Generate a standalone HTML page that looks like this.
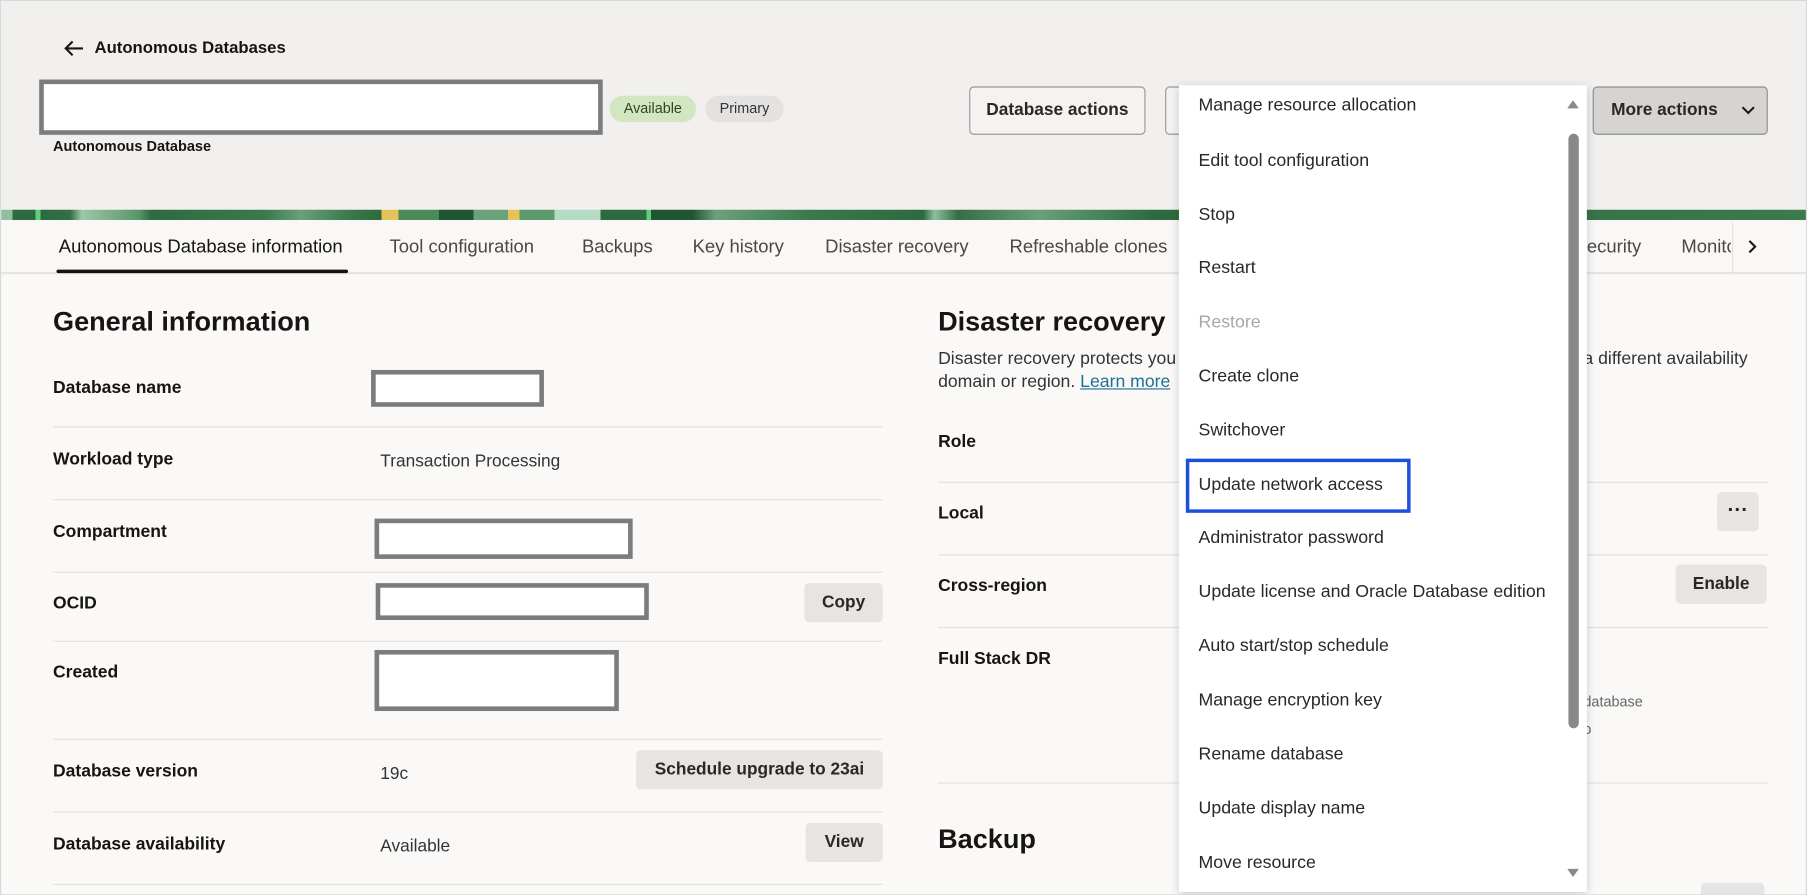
<!DOCTYPE html>
<html><head><meta charset="utf-8"><style>
*{margin:0;padding:0;box-sizing:border-box}
html,body{width:1807px;height:895px;overflow:hidden;background:#fff}
#w{position:absolute;left:0;top:0;width:1568px;height:777px;transform:scale(1.15242);transform-origin:0 0;font-family:"Liberation Sans",sans-serif;color:#161513;background:#faf9f8;border:1px solid #d8d8d8;overflow:hidden}
.a{position:absolute;white-space:nowrap}
.hdr{left:0;top:0;width:1568px;height:181px;background:#f1f0ee}
.ban{left:0;top:181px;width:1568px;height:9px;background:linear-gradient(90deg,#8fbf9f 0,#8fbf9f 10px,#2d6a3f 10px,#2d6a3f 30px,#5fd07a 30px,#5fd07a 34px,#2d6a3f 34px,#356e45 60px,#9cc7a8 70px,#5a9569 120px,#2f6a40 130px,#3b7a4c 230px,#69a07a 260px,#3d7a4d 300px,#2d6a3f 330px,#e6c25a 330px,#e6c25a 345px,#4b8a5b 345px,#4b8a5b 380px,#1f5530 380px,#1f5530 410px,#6ba27b 410px,#6ba27b 440px,#e6c25a 440px,#e6c25a 450px,#5a9a6c 450px,#5a9a6c 480px,#b5dcc2 480px,#b5dcc2 520px,#2d6a3f 520px,#2d6a3f 560px,#5fd07a 560px,#5fd07a 564px,#1f5530 564px,#1f5530 600px,#6ca07c 620px,#3b7a4c 700px,#2d6a3f 800px,#8fbf9f 810px,#356e45 830px,#69a07a 900px,#2d6a3f 1000px,#3b7a4c 1568px)}
.tabs{left:0;top:190px;width:1568px;height:47px;background:#f9f8f6;border-bottom:2px solid #e6e5e3}
.tab{top:205px;font-size:16px;color:#4a4846}
.lbl{font-size:15.2px;font-weight:bold}
.val{font-size:15px;color:#333}
.line{position:absolute;height:1px;background:#e2e1df}
.red{position:absolute;background:#fff;border:4px solid #7c7c7c}
.btn{position:absolute;background:#e6e5e3;border-radius:4px;font-size:15px;font-weight:bold;color:#2a2826;text-align:center}
.mi{position:absolute;left:1039px;font-size:15.4px;color:#2a2826;white-space:nowrap}
h2{position:absolute;font-size:23.5px;font-weight:bold;white-space:nowrap}
</style></head><body><div id="w">
<div class="a hdr"></div>
<div class="a ban"></div>
<div class="a tabs"></div>

<svg class="a" style="left:53px;top:33px" width="20" height="16" viewBox="0 0 20 16"><path d="M18 8H3M9 2L3 8l6 6" fill="none" stroke="#161513" stroke-width="1.8"/></svg>
<div class="a" style="left:81px;top:33px;font-size:14.5px;font-weight:bold">Autonomous Databases</div>
<div class="red" style="left:33px;top:68px;width:489px;height:48px"></div>
<div class="a" style="left:528px;top:82px;width:75px;height:23px;background:#d2e6c2;border-radius:12px;font-size:12.5px;text-align:center;line-height:23px;color:#2c4a1e">Available</div>
<div class="a" style="left:611px;top:82px;width:68px;height:23px;background:#e3e2e0;border-radius:12px;font-size:12.5px;text-align:center;line-height:23px;color:#333">Primary</div>
<div class="a" style="left:45px;top:119px;font-size:12.6px;font-weight:bold">Autonomous Database</div>

<div class="btn" style="left:840px;top:74px;width:153px;height:42px;line-height:40px;background:#f4f3f1;border:1px solid #9a9998">Database actions</div>
<div class="btn" style="left:1010px;top:74px;width:30px;height:42px;background:#f4f3f1;border:1px solid #9a9998"></div>
<div class="btn" style="left:1381px;top:74px;width:152px;height:42px;line-height:40px;background:#d5d4d2;border:1px solid #8e8d8b;text-align:left;padding-left:15px">More actions<svg style="position:absolute;left:128px;top:15px" width="12" height="10" viewBox="0 0 12 10"><path d="M1 2l5 5 5-5" fill="none" stroke="#161513" stroke-width="1.8"/></svg></div>

<div class="a tab" style="left:50px;color:#161513">Autonomous Database information</div>
<div class="a" style="left:48px;top:233px;width:253px;height:3px;background:#161513;border-radius:2px"></div>
<div class="a tab" style="left:337px">Tool configuration</div>
<div class="a tab" style="left:504px">Backups</div>
<div class="a tab" style="left:600px">Key history</div>
<div class="a tab" style="left:715px">Disaster recovery</div>
<div class="a tab" style="left:875px">Refreshable clones</div>
<div class="a tab" style="left:1376px">ecurity</div>
<div class="a" style="left:1458px;top:205px;width:43px;overflow:hidden;font-size:16px;color:#4a4846">Monitoring</div>
<div class="a" style="left:1502px;top:192px;width:1px;height:44px;background:#e2e1df"></div>
<svg class="a" style="left:1514px;top:206px" width="10" height="14" viewBox="0 0 10 14"><path d="M3 2l5 5-5 5" fill="none" stroke="#161513" stroke-width="1.8"/></svg>

<h2 style="left:45px;top:265px">General information</h2>
<div class="a lbl" style="left:45px;top:327px">Database name</div>
<div class="red" style="left:321px;top:320px;width:150px;height:32px"></div>
<div class="line" style="left:45px;top:369px;width:720px"></div>
<div class="a lbl" style="left:45px;top:389px">Workload type</div>
<div class="a val" style="left:329px;top:391px">Transaction Processing</div>
<div class="line" style="left:45px;top:432px;width:720px"></div>
<div class="a lbl" style="left:45px;top:452px">Compartment</div>
<div class="red" style="left:324px;top:449px;width:224px;height:35px"></div>
<div class="line" style="left:45px;top:495px;width:720px"></div>
<div class="a lbl" style="left:45px;top:514px">OCID</div>
<div class="red" style="left:325px;top:505px;width:237px;height:32px"></div>
<div class="btn" style="left:697px;top:505px;width:68px;height:34px;line-height:34px">Copy</div>
<div class="line" style="left:45px;top:555px;width:720px"></div>
<div class="a lbl" style="left:45px;top:574px">Created</div>
<div class="red" style="left:324px;top:563px;width:212px;height:53px"></div>
<div class="line" style="left:45px;top:640px;width:720px"></div>
<div class="a lbl" style="left:45px;top:660px">Database version</div>
<div class="a val" style="left:329px;top:662px">19c</div>
<div class="btn" style="left:551px;top:650px;width:214px;height:34px;line-height:34px">Schedule upgrade to 23ai</div>
<div class="line" style="left:45px;top:703px;width:720px"></div>
<div class="a lbl" style="left:45px;top:723px">Database availability</div>
<div class="a val" style="left:329px;top:725px">Available</div>
<div class="btn" style="left:698px;top:713px;width:67px;height:34px;line-height:34px">View</div>
<div class="line" style="left:45px;top:766px;width:720px"></div>

<h2 style="left:813px;top:265px">Disaster recovery</h2>
<div class="a val" style="left:813px;top:302px;font-size:15.3px">Disaster recovery protects you</div>
<div class="a val" style="left:813px;top:322px;font-size:15.3px">domain or region. <span style="color:#1d6f94;text-decoration:underline">Learn more</span></div>
<div class="a val" style="left:1373px;top:302px;font-size:15.3px">a different availability</div>
<div class="a lbl" style="left:813px;top:374px">Role</div>
<div class="line" style="left:813px;top:417px;width:720px"></div>
<div class="a lbl" style="left:813px;top:436px">Local</div>
<div class="btn" style="left:1489px;top:426px;width:36px;height:34px;line-height:30px;font-size:18px">···</div>
<div class="line" style="left:813px;top:480px;width:720px"></div>
<div class="a lbl" style="left:813px;top:499px">Cross-region</div>
<div class="btn" style="left:1453px;top:489px;width:79px;height:34px;line-height:34px">Enable</div>
<div class="line" style="left:813px;top:543px;width:720px"></div>
<div class="a lbl" style="left:813px;top:562px">Full Stack DR</div>
<div class="a" style="left:1373px;top:601px;font-size:12.5px;color:#666">database</div>
<div class="a" style="left:1373px;top:625px;font-size:12.5px;color:#666">o</div>
<div class="line" style="left:813px;top:678px;width:720px"></div>
<h2 style="left:813px;top:714px">Backup</h2>
<div class="btn" style="left:1475px;top:765px;width:55px;height:20px"></div>

<div class="a" style="left:1022px;top:73px;width:354px;height:700px;background:#fff;box-shadow:0 2px 8px rgba(0,0,0,.18)"></div>
<div class="a" style="left:1360px;top:115px;width:9px;height:516px;background:#888;border-radius:5px"></div>
<svg class="a" style="left:1358px;top:84px" width="12" height="10"><path d="M1 9L6 2l5 7z" fill="#8a8a8a"/></svg>
<svg class="a" style="left:1358px;top:752px" width="12" height="10"><path d="M1 1h10L6 8z" fill="#8a8a8a"/></svg>
<div class="mi" style="top:82px">Manage resource allocation</div>
<div class="mi" style="top:130px">Edit tool configuration</div>
<div class="mi" style="top:177px">Stop</div>
<div class="mi" style="top:223px">Restart</div>
<div class="mi" style="top:270px;color:#a8a7a5">Restore</div>
<div class="mi" style="top:317px">Create clone</div>
<div class="mi" style="top:364px">Switchover</div>
<div class="a" style="left:1028px;top:397px;width:195px;height:47px;border:3px solid #1a4fe0"></div>
<div class="mi" style="top:411px">Update network access</div>
<div class="mi" style="top:457px">Administrator password</div>
<div class="mi" style="top:504px">Update license and Oracle Database edition</div>
<div class="mi" style="top:551px">Auto start/stop schedule</div>
<div class="mi" style="top:598px">Manage encryption key</div>
<div class="mi" style="top:645px">Rename database</div>
<div class="mi" style="top:692px">Update display name</div>
<div class="mi" style="top:739px">Move resource</div>
</div></body></html>
